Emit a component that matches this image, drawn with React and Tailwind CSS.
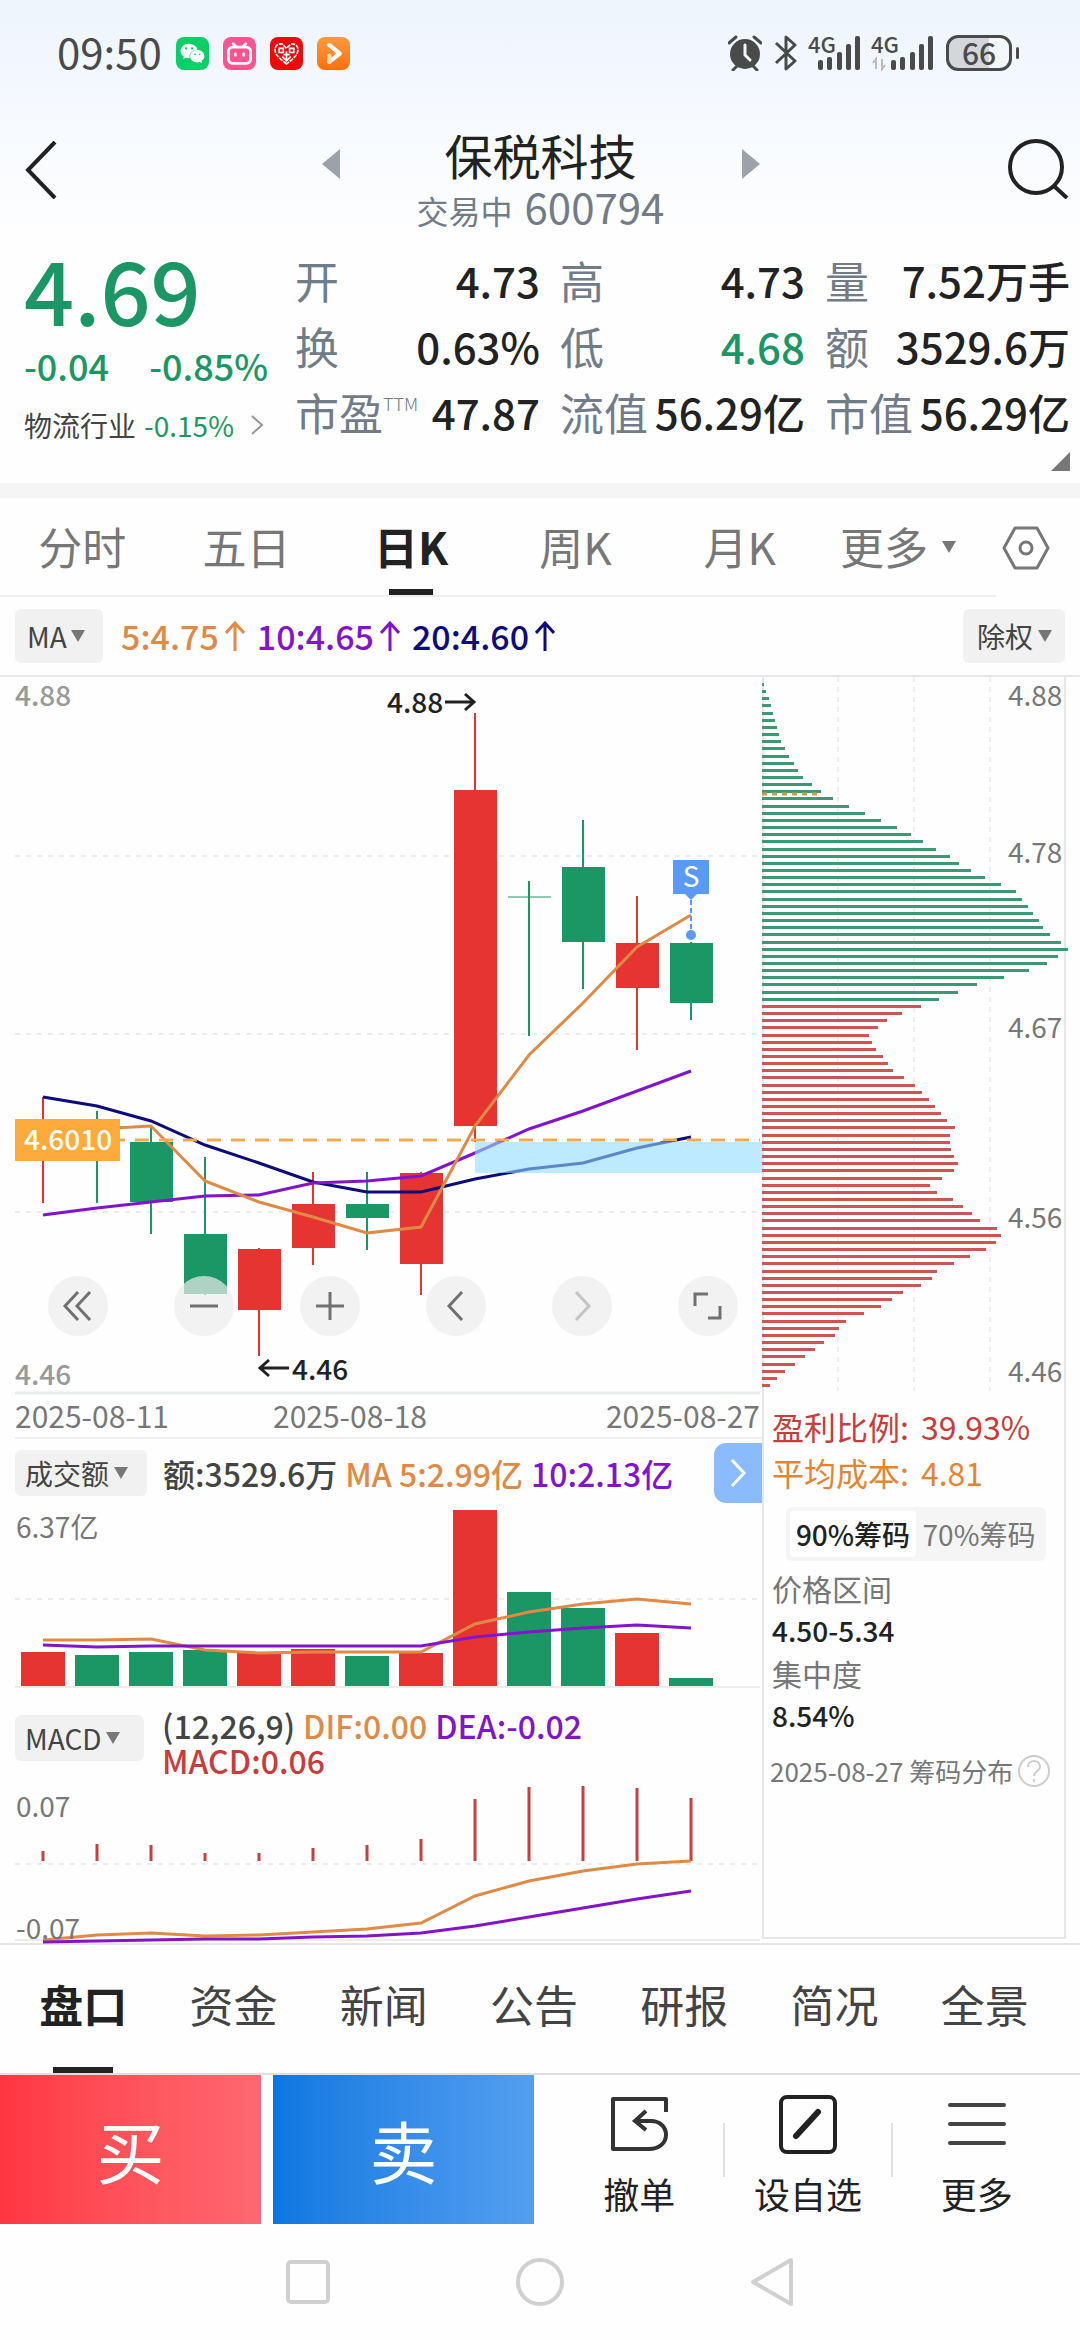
import { useState } from "react";
import { FaWeixin } from "react-icons/fa";
import { SiBilibili } from "react-icons/si";

const RED = "#e63431";
const GREEN = "#1b9665";
const ORANGE = "#e08a45";
const PURPLE = "#8414cc";
const NAVY = "#0c0c7c";

// x of the n-th trading day, shared by all three charts
const dayX = (i) => 43 + i * 54;
const toPoints = (ys) => ys.map((y, i) => `${dayX(i)},${y}`).join(" ");

// high / low / body top / body bottom
const CANDLES = [
  { up: true, high: 1097, low: 1203, top: 1122, bottom: 1158 },
  { up: false, high: 1111, low: 1203, top: 1122, bottom: 1158 },
  { up: false, high: 1125, low: 1234, top: 1142, bottom: 1202 },
  { up: false, high: 1157, low: 1295, top: 1234, bottom: 1294 },
  { up: true, high: 1248, low: 1356, top: 1249, bottom: 1310 },
  { up: true, high: 1172, low: 1265, top: 1204, bottom: 1248 },
  { up: false, high: 1172, low: 1250, top: 1204, bottom: 1218 },
  { up: true, high: 1172, low: 1295, top: 1173, bottom: 1264 },
  { up: true, high: 713, low: 1142, top: 790, bottom: 1126 },
  { up: false, high: 881, low: 1036, top: 896, bottom: 898 },
  { up: false, high: 820, low: 989, top: 867, bottom: 942 },
  { up: true, high: 896, low: 1050, top: 943, bottom: 988 },
  { up: false, high: 942, low: 1020, top: 943, bottom: 1003 },
];

const MA5 = [1134, 1129, 1126, 1181, 1202, 1217, 1233, 1227, 1126, 1055, 1003, 947, 915];
const MA10 = [1215, 1208, 1202, 1196, 1195, 1183, 1181, 1176, 1153, 1129, 1111, 1091, 1071];
const MA20 = [1097, 1106, 1121, 1145, 1163, 1182, 1192, 1192, 1179, 1169, 1163, 1148, 1137];

const VOLUME = [1652, 1655, 1652, 1650, 1653, 1649, 1656, 1653, 1510, 1592, 1608, 1633, 1678];
const VOLUME_UP = [1, 0, 0, 0, 1, 1, 0, 1, 1, 0, 0, 1, 0];
const VOL_MA5 = [1640, 1640, 1639, 1650, 1653, 1652, 1652, 1652, 1624, 1612, 1604, 1599, 1604];
const VOL_MA10 = [1645, 1647, 1646, 1646, 1646, 1646, 1646, 1646, 1637, 1632, 1628, 1625, 1628];

const MACD_BARS = [1852, 1845, 1846, 1854, 1854, 1849, 1846, 1840, 1800, 1788, 1787, 1789, 1799];
const DIF = [1941, 1936, 1934, 1937, 1936, 1933, 1930, 1924, 1897, 1882, 1872, 1865, 1862];
const DEA = [1943, 1942, 1941, 1940, 1940, 1938, 1937, 1934, 1927, 1918, 1909, 1900, 1892];

const CHIPS_ABOVE = [
  2, 4, 7, 9, 11, 13, 15, 17, 19, 23, 27, 32, 36, 41, 50, 59, 71, 87, 103, 119, 135, 149, 161, 174,
  188, 197, 209, 223, 239, 254, 260, 266, 271, 277, 281, 288, 299, 306, 296, 285, 267, 242, 215,
  196, 177,
];
const CHIPS_BELOW = [
  159, 140, 125, 116, 107, 110, 114, 121, 126, 131, 142, 153, 160, 167, 173, 179, 185, 193, 188,
  188, 189, 192, 196, 192, 180, 168, 175, 191, 201, 210, 218, 235, 239, 234, 224, 208, 192, 175,
  170, 159, 141, 130, 119, 102, 84, 77, 73, 62, 53, 43, 33, 23, 15, 8,
];
const CHIPS = [
  ...CHIPS_ABOVE.map((len) => ({ len, color: "#3a9a74" })),
  ...CHIPS_BELOW.map((len) => ({ len, color: "#d05454" })),
];

const QUOTES = [
  { label: "开", value: "4.73" },
  { label: "高", value: "4.73" },
  { label: "量", value: "7.52万手" },
  { label: "换", value: "0.63%" },
  { label: "低", value: "4.68", green: true },
  { label: "额", value: "3529.6万" },
  { label: "市盈", sup: "TTM", value: "47.87" },
  { label: "流值", value: "56.29亿" },
  { label: "市值", value: "56.29亿" },
];

const PERIODS = ["分时", "五日", "日K", "周K", "月K"];
const SECTIONS = ["盘口", "资金", "新闻", "公告", "研报", "简况", "全景"];

// --- SMALL PARTS ---

function Caret() {
  return (
    <svg viewBox="0 0 14 12" className="h-3 w-3.5 shrink-0" fill="#777">
      <path d="M0 0h14L7 12z" />
    </svg>
  );
}

function PillSelect({ label, name, className = "" }) {
  return (
    <label className={`flex items-center gap-1 rounded-md bg-[#f1f1f1] text-[#444] ${className}`}>
      <select
        aria-label={name}
        className="appearance-none bg-transparent p-0 text-[28px] leading-[46px] outline-none"
      >
        <option>{label}</option>
      </select>
      <Caret />
    </label>
  );
}

function UpArrow() {
  return (
    <svg viewBox="0 0 20 30" className="ml-1.5 h-[30px] w-5" fill="none" stroke="currentColor" strokeWidth="3">
      <path d="M10 30V2M1 12l9-10 9 10" />
    </svg>
  );
}

function SignalBars({ x }) {
  return (
    <g>
      <rect x={x} y="25" width="5" height="10" rx="2" />
      <rect x={x + 9} y="22" width="5" height="13" rx="2" />
      <rect x={x + 19} y="17" width="5" height="18" rx="2" />
      <rect x={x + 28} y="9" width="5" height="26" rx="2" />
      <rect x={x + 37} y="1" width="5" height="34" rx="2" />
    </g>
  );
}

function StatusBar() {
  return (
    <div className="flex items-center justify-between pt-[34px] pr-[61px] pl-[57px] text-[#4a4a4a]">
      <div className="flex items-center gap-3.5">
        <span className="-mt-1 text-[42px] leading-[42px]">09:50</span>
        <div className="flex size-[33px] items-center justify-center rounded-lg bg-[#09cf67] text-white">
          <FaWeixin size={25} />
        </div>
        <div className="flex size-[33px] items-center justify-center rounded-lg bg-[#fb5590] text-white">
          <SiBilibili size={25} />
        </div>
        <div className="flex size-[33px] items-center justify-center rounded-lg bg-[#ee0a0a]">
          <svg viewBox="0 0 24 24" className="size-[25px]" fill="none" stroke="#fff" strokeWidth="1.6">
            <path d="M12 22C6 17 1 14 1 8c0-4 4-6 7-5l4 4 4-4c3-1 7 1 7 5 0 6-5 9-11 14z" strokeDasharray="4 1" />
            <path d="M5 7h4v4H5zM15 7h4v4h-4zM9 13h6M12 10v9M8 15l4 4 4-4" />
          </svg>
        </div>
        <div className="flex size-[33px] items-center justify-center rounded-lg bg-gradient-to-b from-[#fb9a3c] to-[#fd7005]">
          <svg viewBox="0 0 24 24" className="size-[25px]" fill="none" stroke="#fff" strokeLinecap="round" strokeLinejoin="round">
            <path d="M8 4l10 8-10 8" strokeWidth="4" />
            <path d="M8 20v-6" strokeWidth="4" stroke="#ffd9b3" />
          </svg>
        </div>
      </div>
      <div className="flex items-center">
        <svg viewBox="0 0 34 36" className="mr-3 h-9 w-[34px]" fill="#4a4a4a">
          <path d="M1 8l7-6M33 8l-7-6M9 31l-4 4M25 31l4 4" stroke="#4a4a4a" strokeWidth="3" strokeLinecap="round" />
          <circle cx="17" cy="19" r="15" />
          <path d="M17 10v10l5 5" fill="none" stroke="#f3f8ff" strokeWidth="3" strokeLinecap="round" />
        </svg>
        <svg viewBox="0 0 24 36" className="mr-3 h-9 w-6" fill="none" stroke="#4a4a4a" strokeWidth="3">
          <path d="M2 8l19 18-9 8V2l9 8L2 28" strokeLinejoin="round" />
        </svg>
        <svg viewBox="0 0 50 36" className="mr-3 h-9 w-[50px] overflow-visible" fill="#4a4a4a">
          <text x="-2" y="18" fontSize="22" fontWeight="500">4G</text>
          <SignalBars x={8} />
        </svg>
        <svg viewBox="0 0 62 36" className="mr-3 h-9 w-[62px] overflow-visible" fill="#4a4a4a">
          <text x="-1" y="18" fontSize="22" fontWeight="500">4G</text>
          <path d="M4 34V24l-3 4M10 24v10l3-4" fill="none" stroke="#bbb" strokeWidth="2" />
          <SignalBars x={19} />
        </svg>
        <div className="flex items-center gap-1">
          <div className="flex h-9 w-[66px] items-center justify-center rounded-xl border-[3px] border-[#4a4a4a] bg-[linear-gradient(90deg,#d3d6da_66%,#f3f8ff_66%)]">
            <span className="-mt-0.5 text-[30px] leading-7 font-medium">66</span>
          </div>
          <div className="h-3 w-[3px] rounded-full bg-[#4a4a4a]" />
        </div>
      </div>
    </div>
  );
}

function Header() {
  return (
    <header className="mt-[53px] flex items-start justify-between pr-2.5 pl-[25px]">
      <button type="button" aria-label="返回" className="mt-4 w-12">
        <svg viewBox="0 0 32 58" className="h-[58px] w-8" fill="none" stroke="#222" strokeWidth="4">
          <path d="M30 1L3 29l27 28" />
        </svg>
      </button>
      <div className="flex items-start">
        <button type="button" aria-label="上一只" className="mt-6">
          <svg viewBox="0 0 18 30" className="h-[30px] w-[18px]" fill="#9aa3ac">
            <path d="M18 0v30L0 15z" />
          </svg>
        </button>
        <div className="flex w-[402px] flex-col items-center">
          <h1 className="text-[48px] leading-[58px] text-[#222]">保税科技</h1>
          <p className="flex items-baseline gap-3 leading-[46px] text-[#717c88]">
            <span className="text-[32px]">交易中</span>
            <span className="text-[42px]">600794</span>
          </p>
        </div>
        <button type="button" aria-label="下一只" className="mt-6">
          <svg viewBox="0 0 18 30" className="h-[30px] w-[18px]" fill="#9aa3ac">
            <path d="M0 0v30l18-15z" />
          </svg>
        </button>
      </div>
      <button type="button" aria-label="搜索" className="mt-3">
        <svg viewBox="0 0 62 62" className="size-[62px]" fill="none" stroke="#222" strokeWidth="4">
          <circle cx="28" cy="30" r="26" />
          <path d="M46 49l13 12" />
        </svg>
      </button>
    </header>
  );
}

function Quote() {
  return (
    <section className="relative flex px-6 pt-2.5 pr-2.5 pb-[38px]">
      <div className="w-[271px] shrink-0 text-[#1b9665]">
        <div className="text-[88px] leading-[90px] font-medium">4.69</div>
        <div className="mt-2 flex gap-10 text-[36px] leading-[48px] font-medium">
          <span>-0.04</span>
          <span>-0.85%</span>
        </div>
        <a href="#industry" className="mt-4 flex items-center gap-2 text-[28px] leading-10">
          <span className="text-[#444]">物流行业</span>
          <span>-0.15%</span>
          <svg viewBox="0 0 14 20" className="ml-2 h-5 w-3.5" fill="none" stroke="#999" strokeWidth="2">
            <path d="M2 1l10 9-10 9" />
          </svg>
        </a>
      </div>
      <dl className="mt-1 grid grow grid-cols-3 gap-x-5">
        {QUOTES.map(({ label, sup, value, green }) => (
          <div key={label} className="flex items-center justify-between leading-[66px] whitespace-nowrap">
            <dt className="flex text-[44px] text-[#717c88]">
              {label}
              {sup && <span className="text-[18px] leading-[48px] font-light">{sup}</span>}
            </dt>
            <dd className={`text-[42px] font-medium ${green ? "text-[#1b9665]" : "text-[#222]"}`}>
              {value}
            </dd>
          </div>
        ))}
      </dl>
      <svg viewBox="0 0 20 20" className="absolute right-2.5 bottom-3 size-[19px]" fill="#777">
        <path d="M20 0v20H0z" />
      </svg>
    </section>
  );
}

function PeriodTabs() {
  const [active, setActive] = useState("日K");
  return (
    <nav className="flex items-center justify-between pr-[30px]">
      <div className="flex grow border-b-2 border-[#f0f0f0]">
        {PERIODS.map((name) => (
          <button
            key={name}
            type="button"
            onClick={() => setActive(name)}
            className={`relative flex-1 text-[44px] leading-[97px] ${
              active === name ? "font-bold text-[#222]" : "text-[#777]"
            }`}
          >
            {name}
            {active === name && (
              <span className="absolute bottom-0 left-1/2 h-1.5 w-11 -translate-x-1/2 bg-[#222]" />
            )}
          </button>
        ))}
        <button type="button" className="flex w-[174px] items-center gap-3.5 pl-[18px] text-[44px] leading-[97px] text-[#777]">
          更多
          <Caret />
        </button>
      </div>
      <button type="button" aria-label="设置" className="ml-1.5">
        <svg viewBox="0 0 48 44" className="h-11 w-12" fill="none" stroke="#777" strokeWidth="3">
          <path d="M13 2h22l11 20-11 20H13L2 22z" strokeLinejoin="round" />
          <circle cx="24" cy="22" r="6" />
        </svg>
      </button>
    </nav>
  );
}

function AverageLegend() {
  return (
    <div className="flex items-center border-b-2 border-[#e6e6e6] py-3 pr-[15px] pl-[15px] text-[34px] leading-[54px] font-medium">
      <PillSelect label="MA" name="均线" className="w-[88px] py-1 pl-3 font-normal" />
      <span className="ml-[18px] flex items-center text-[#e08a45]">5:4.75<UpArrow /></span>
      <span className="ml-3 flex items-center text-[#8414cc]">10:4.65<UpArrow /></span>
      <span className="ml-3 flex items-center text-[#0c0c7c]">20:4.60<UpArrow /></span>
      <PillSelect label="除权" name="复权" className="ml-auto w-[102px] py-1 pl-3.5 font-normal" />
    </div>
  );
}

// --- CHARTS ---

function CandleChart() {
  return (
    <svg viewBox="0 677 762 717" className="block w-full overflow-visible" fontSize="28" fill="none">
      {[856, 1034, 1212].map((y) => (
        <path key={y} d={`M15 ${y}H760`} stroke="#ececec" strokeWidth="2" strokeDasharray="5 6" />
      ))}
      <path d="M15 1393H760" stroke="#e9edec" strokeWidth="3" />
      {CANDLES.map(({ up, high, low, top, bottom }, i) => (
        <g key={i} fill={up ? RED : GREEN}>
          <rect x={dayX(i) - 1} y={high} width="2" height={low - high} />
          <rect
            x={dayX(i) - 21}
            y={top}
            width="43"
            height={bottom - top}
            opacity={bottom - top < 4 ? 0.5 : 1}
          />
        </g>
      ))}
      <polyline points={toPoints(MA20)} stroke={NAVY} strokeWidth="3" />
      <polyline points={toPoints(MA10)} stroke={PURPLE} strokeWidth="3" />
      <rect x="475" y="1142" width="287" height="31" fill="#91dcff" opacity="0.6" />
      <polyline points={toPoints(MA5)} stroke={ORANGE} strokeWidth="3" />
      <path d="M15 1140H760" stroke="#efac50" strokeWidth="3" strokeDasharray="14 10" />
      <rect x="15" y="1119" width="105" height="42" fill="#ffaa3c" />
      <text x="24" y="1150" fill="#fff" fontWeight="500">4.6010</text>

      <text x="15" y="706" fill="#999" fontWeight="500">4.88</text>
      <text x="15" y="1385" fill="#999" fontWeight="500">4.46</text>
      <g fill="#222" fontWeight="500">
        <text x="387" y="713">4.88</text>
        <text x="292" y="1380">4.46</text>
      </g>
      <path d="M445 702h28M465 694l9 8-9 8M289 1368h-28M269 1360l-9 8 9 8" stroke="#222" strokeWidth="3" />

      <path d="M673 860h36v34h-12l-6 6-6-6h-12z" fill="#5a9af5" />
      <text x="691" y="887" fill="#fff" fontSize="28" textAnchor="middle">S</text>
      <path d="M691 900v32" stroke="#5a9af5" strokeWidth="2" strokeDasharray="5 3" />
      <circle cx="691" cy="935" r="5" fill="#5a9af5" />
    </svg>
  );
}

const CHART_BUTTONS = [
  { name: "最左", path: "M30 16L17 30l13 14M42 16L29 30l13 14" },
  { name: "缩小", path: "M16 30h28" },
  { name: "放大", path: "M16 30h28M30 16v28" },
  { name: "左移", path: "M36 16L23 30l13 14" },
  { name: "右移", path: "M24 16l13 14-13 14", muted: true },
  { name: "全屏", path: "M17 30V18h13M30 42h12V30" },
];

function ChartButtons() {
  return (
    <div className="absolute inset-x-0 bottom-[58px] flex justify-between pr-6 pl-12">
      {CHART_BUTTONS.map(({ name, path, muted }) => (
        <button key={name} type="button" aria-label={name} className="size-[60px] rounded-full bg-[#ececec]/70">
          <svg viewBox="0 0 60 60" fill="none" stroke={muted ? "#c4c4c4" : "#707070"} strokeWidth="3">
            <path d={path} />
          </svg>
        </button>
      ))}
    </div>
  );
}

function VolumeChart() {
  return (
    <svg viewBox="0 1505 762 185" className="block w-full overflow-visible" fontSize="28" fill="none">
      <path d="M15 1599H760" stroke="#ececec" strokeWidth="2" strokeDasharray="5 6" />
      <path d="M15 1687H760" stroke="#ececec" strokeWidth="2" />
      <text x="16" y="1538" fill="#777">6.37亿</text>
      {VOLUME.map((y, i) => (
        <rect key={i} x={dayX(i) - 22} y={y} width="44" height={1686 - y} fill={VOLUME_UP[i] ? RED : GREEN} />
      ))}
      <polyline points={toPoints(VOL_MA5)} stroke={ORANGE} strokeWidth="3" />
      <polyline points={toPoints(VOL_MA10)} stroke={PURPLE} strokeWidth="3" />
    </svg>
  );
}

function MacdChart() {
  return (
    <svg viewBox="0 1785 762 159" className="block w-full overflow-visible" fontSize="28" fill="none">
      <path d="M15 1865H760" stroke="#ececec" strokeWidth="2" strokeDasharray="5 6" />
      <path d="M15 1941H760" stroke="#ececec" strokeWidth="2" />
      {MACD_BARS.map((y, i) => (
        <path key={i} d={`M${dayX(i)} ${y}V1862`} stroke="#c64040" strokeWidth="3" />
      ))}
      <polyline points={toPoints(DIF)} stroke={ORANGE} strokeWidth="3" />
      <polyline points={toPoints(DEA)} stroke={PURPLE} strokeWidth="3" />
      <text x="16" y="1818" fill="#777">0.07</text>
      <text x="16" y="1940" fill="#777">-0.07</text>
    </svg>
  );
}

function ChipChart() {
  return (
    <div className="-mx-0.5">
      <svg viewBox="762 677 304 714" className="block w-full overflow-visible" fontSize="28" fill="none">
        {[838, 914, 990].map((x) => (
          <path key={x} d={`M${x} 677V1391`} stroke="#eee" strokeWidth="2" strokeDasharray="5 5" />
        ))}
        {CHIPS.map(({ len, color }, i) => (
          <rect key={i} x="762" y={Math.round(683 + (i * 701) / 98)} width={len} height="3" fill={color} />
        ))}
        <path d="M762 794h60" stroke="#d9944a" strokeWidth="3" strokeDasharray="5 5" />
        <g fill="#777">
          <text x="1008" y="706">4.88</text>
          <text x="1008" y="863">4.78</text>
          <text x="1008" y="1038">4.67</text>
          <text x="1008" y="1228">4.56</text>
          <text x="1008" y="1382">4.46</text>
        </g>
      </svg>
    </div>
  );
}

function ChipPanel() {
  const [range, setRange] = useState("90%筹码");
  return (
    <aside className="mb-1 flex flex-col border-x-2 border-b-2 border-[#e6e6e6]">
      <ChipChart />
      <div className="px-2 text-[30px] whitespace-nowrap">
        <p className="mt-3 flex gap-3 text-[32px] leading-[46px] text-[#c93c3c]">
          <span>盈利比例:</span>
          <span>39.93%</span>
        </p>
        <p className="flex gap-3 text-[32px] leading-[46px] text-[#e58534]">
          <span>平均成本:</span>
          <span>4.81</span>
        </p>
        <div className="mt-3 mr-2.5 ml-3.5 flex rounded-md bg-[#f5f5f5] p-1 text-[28px] leading-[46px]">
          {["90%筹码", "70%筹码"].map((name) => (
            <button
              key={name}
              type="button"
              onClick={() => setRange(name)}
              className={`flex-1 rounded ${
                range === name ? "bg-white font-medium text-[#222]" : "text-[#777]"
              }`}
            >
              {name}
            </button>
          ))}
        </div>
        <dl className="mt-1.5 leading-[42px]">
          <dt className="text-[#777]">价格区间</dt>
          <dd className="text-[28px] leading-[43px] font-medium text-[#222]">4.50-5.34</dd>
          <dt className="text-[#777]">集中度</dt>
          <dd className="text-[28px] leading-[43px] font-medium text-[#222]">8.54%</dd>
        </dl>
        <p className="-ml-0.5 mt-3.5 flex items-center gap-1 text-[26px] leading-10 text-[#777]">
          2025-08-27 筹码分布
          <button type="button" aria-label="说明">
            <svg viewBox="0 0 34 34" className="size-[34px]" fill="none" stroke="#ccc" strokeWidth="2">
              <circle cx="17" cy="17" r="15" />
              <path d="M11 13c0-8 12-8 12 0 0 4-6 4-6 9M17 25v3" />
            </svg>
          </button>
        </p>
      </div>
    </aside>
  );
}

function Charts() {
  return (
    <section className="grid grid-cols-[762fr_304fr] border-b-2 border-[#e6e6e6] pr-3.5">
      <div>
        <div className="relative">
          <CandleChart />
          <ChartButtons />
        </div>
        <div className="ml-[15px] flex border-b-2 border-[#efefef] text-[30px] leading-[43px] text-[#777]">
          <time className="w-[258px]">2025-08-11</time>
          <time>2025-08-18</time>
          <time className="ml-auto pr-0.5">2025-08-27</time>
        </div>
        <div className="flex items-center pt-1 pb-0.5 pl-[15px] text-[32px] leading-10 font-medium whitespace-nowrap">
          <PillSelect label="成交额" name="副图指标一" className="w-[132px] pl-2.5 font-normal" />
          <span className="ml-4 text-[#444]">额:3529.6万</span>
          <span className="ml-2 text-[#e08a45]">MA 5:2.99亿</span>
          <span className="ml-2 text-[#8414cc]">10:2.13亿</span>
          <button type="button" aria-label="展开" className="ml-auto flex h-[60px] w-12 items-center justify-center rounded-l-xl bg-[#8abbff]">
            <svg viewBox="0 0 16 28" className="h-7 w-4" fill="none" stroke="#fff" strokeWidth="3">
              <path d="M2 1l12 13L2 27" />
            </svg>
          </button>
        </div>
        <VolumeChart />
        <div className="flex items-start pt-[18px] pb-[6px] pl-[15px] text-[32px] leading-[35px] font-medium">
          <PillSelect label="MACD" name="副图指标二" className="mt-[7px] w-[129px] pl-2.5 font-normal" />
          <p className="ml-[18px] flex flex-1 flex-wrap gap-x-2 pr-20">
            <span className="text-[#444]">(12,26,9)</span>
            <span className="text-[#e08a45]">DIF:0.00</span>
            <span className="text-[#8414cc]">DEA:-0.02</span>
            <span className="text-[#c93c3c]">MACD:0.06</span>
          </p>
        </div>
        <MacdChart />
      </div>
      <ChipPanel />
    </section>
  );
}

// --- BOTTOM ---

function SectionTabs() {
  const [active, setActive] = useState("盘口");
  return (
    <nav className="flex border-b-2 border-[#e0e0e0] pr-5 pl-2">
      {SECTIONS.map((name) => (
        <button
          key={name}
          type="button"
          onClick={() => setActive(name)}
          className={`relative flex-1 pb-2.5 text-[44px] leading-[118px] ${
            active === name ? "font-bold text-[#222]" : "text-[#444]"
          }`}
        >
          {name}
          {active === name && (
            <span className="absolute bottom-0 left-1/2 h-1.5 w-[60px] -translate-x-1/2 bg-[#222]" />
          )}
        </button>
      ))}
    </nav>
  );
}

function ActionBar() {
  return (
    <div className="flex">
      <button type="button" className="w-[261px] bg-gradient-to-r from-[#ff3642] to-[#ff6871] text-[68px] leading-[149px] text-white">
        买
      </button>
      <button type="button" className="ml-3 w-[261px] bg-gradient-to-r from-[#0878e0] to-[#529ff0] text-[68px] leading-[149px] text-white">
        卖
      </button>
      <div className="flex grow items-center pr-5 pl-[22px] text-[36px] leading-[46px] text-[#222]">
        <button type="button" className="flex flex-1 flex-col items-center gap-4 pt-2.5">
          <svg viewBox="0 0 60 60" className="size-[60px]" fill="none" stroke="#333" strokeWidth="4">
            <path d="M57 18V5H4v50h36c10 0 17-6 17-14S51 27 42 27H27" strokeLinejoin="round" />
            <path d="M37 17L26 27l11 9" />
          </svg>
          撤单
        </button>
        <span className="h-[54px] w-0.5 bg-[#e0e0e0]" />
        <button type="button" className="flex flex-1 flex-col items-center gap-4 pt-2.5">
          <svg viewBox="0 0 60 60" className="size-[60px]" fill="none" stroke="#222" strokeWidth="4">
            <rect x="3" y="3" width="54" height="55" rx="6" />
            <path d="M18 42l22-24" strokeWidth="6" strokeLinecap="round" />
          </svg>
          设自选
        </button>
        <span className="h-[54px] w-0.5 bg-[#e0e0e0]" />
        <button type="button" className="flex flex-1 flex-col items-center gap-4 pt-2.5">
          <svg viewBox="0 0 60 60" className="size-[60px]" fill="none" stroke="#444" strokeWidth="4" strokeLinecap="round">
            <path d="M3 11h54M3 30h54M3 49h54" />
          </svg>
          更多
        </button>
      </div>
    </div>
  );
}

function SystemNav() {
  return (
    <div className="flex items-center justify-center gap-[182px] pt-8 pb-4">
      <button type="button" aria-label="最近任务">
        <svg viewBox="0 0 48 52" className="h-[52px] w-12" fill="none" stroke="#d0d0d0" strokeWidth="4">
          <rect x="4" y="6" width="40" height="40" rx="3" />
        </svg>
      </button>
      <button type="button" aria-label="主屏幕">
        <svg viewBox="0 0 52 52" className="size-[52px]" fill="none" stroke="#d0d0d0" strokeWidth="4">
          <circle cx="26" cy="26" r="22" />
        </svg>
      </button>
      <button type="button" aria-label="返回上级">
        <svg viewBox="0 0 48 52" className="h-[52px] w-12" fill="none" stroke="#d0d0d0" strokeWidth="4" strokeLinejoin="round">
          <path d="M43 4v44L5 26z" />
        </svg>
      </button>
    </div>
  );
}

export default function App() {
  return (
    <div className="min-h-screen bg-[#fefefe] font-['Noto_Sans_CJK_SC',sans-serif]">
      <div className="bg-gradient-to-b from-[#eef5fe] to-[#fefefe]">
        <StatusBar />
        <Header />
      </div>
      <Quote />
      <div className="h-[15px] bg-[#f5f5f5]" />
      <PeriodTabs />
      <AverageLegend />
      <Charts />
      <SectionTabs />
      <ActionBar />
      <SystemNav />
    </div>
  );
}
